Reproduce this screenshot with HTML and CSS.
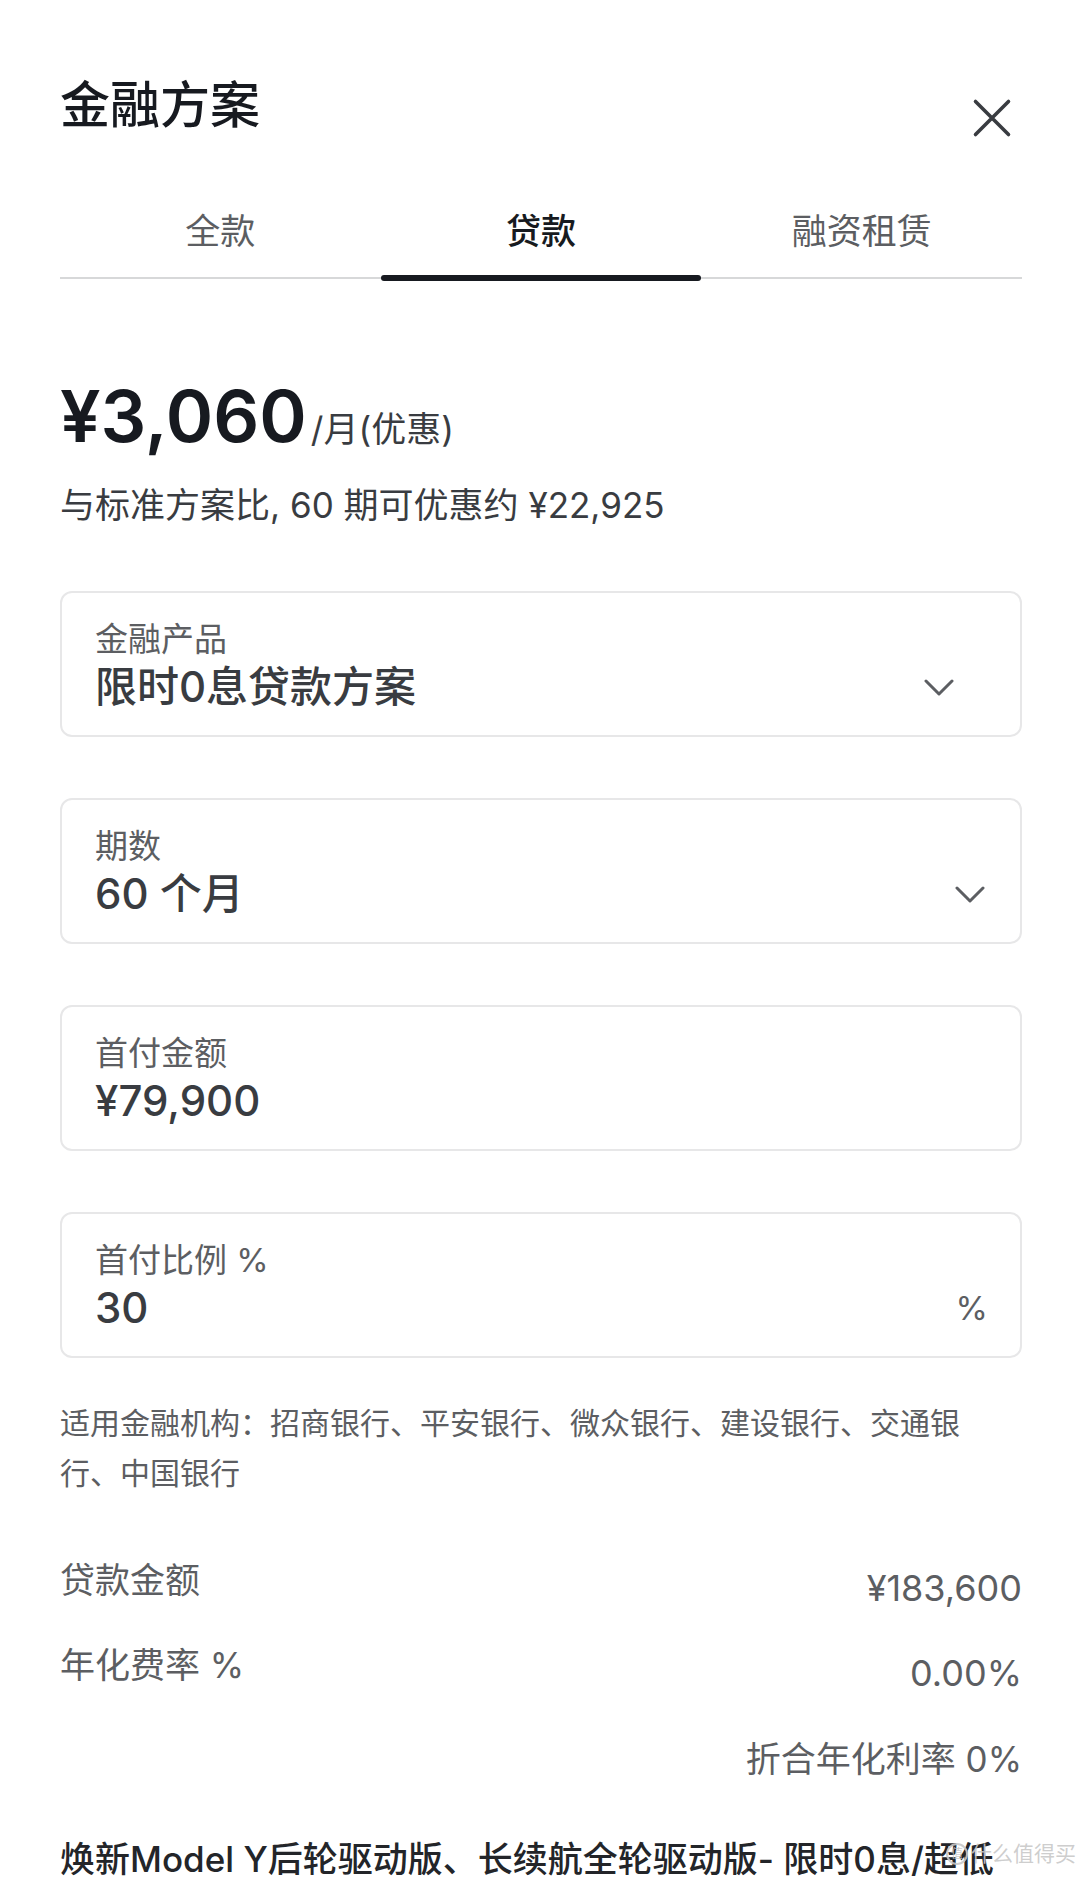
FILE: index.html
```html
<!DOCTYPE html>
<html lang="zh-CN">
<head>
<meta charset="utf-8">
<title>金融方案</title>
<link rel="stylesheet" href="styles.css">
</head>
<body>
<div class="page">
  <header class="header">
    <h1 class="title">金融方案</h1>
    <button class="close" aria-label="关闭">
      <svg viewBox="0 0 40 40" width="40" height="40"><path d="M3.5 3.5 L36.5 36.5 M36.5 3.5 L3.5 36.5" stroke="#393c41" stroke-width="3.6" stroke-linecap="round" fill="none"/></svg>
    </button>
  </header>

  <nav class="tabs">
    <div class="tab">全款</div>
    <div class="tab active">贷款</div>
    <div class="tab">融资租赁</div>
  </nav>

  <div class="price"><span class="amount">¥3,060</span><span class="unit">/月(优惠)</span></div>
  <p class="sub">与标准方案比, 60 期可优惠约 ¥22,925</p>

  <div class="field">
    <div class="label">金融产品</div>
    <div class="value-row">
      <span class="value">限时0息贷款方案</span>
      <svg class="chev chev-inset" viewBox="0 0 30 17" width="30" height="17"><path d="M2 2 L15 15 L28 2" stroke="#5c5e62" stroke-width="3" stroke-linecap="round" stroke-linejoin="round" fill="none"/></svg>
    </div>
  </div>

  <div class="field">
    <div class="label">期数</div>
    <div class="value-row">
      <span class="value">60 个月</span>
      <svg class="chev" viewBox="0 0 30 17" width="30" height="17"><path d="M2 2 L15 15 L28 2" stroke="#5c5e62" stroke-width="3" stroke-linecap="round" stroke-linejoin="round" fill="none"/></svg>
    </div>
  </div>

  <div class="field">
    <div class="label">首付金额</div>
    <div class="value-row">
      <span class="value">¥79,900</span>
    </div>
  </div>

  <div class="field">
    <div class="label">首付比例 %</div>
    <div class="value-row">
      <span class="value">30</span>
      <span class="suffix">%</span>
    </div>
  </div>

  <p class="banks">适用金融机构：招商银行、平安银行、微众银行、建设银行、交通银行、中国银行</p>

  <div class="row row-first">
    <span class="row-label">贷款金额</span>
    <span class="row-value">¥183,600</span>
  </div>
  <div class="row row-second">
    <span class="row-label">年化费率 %</span>
    <span class="row-value">0.00%</span>
  </div>
  <div class="note">折合年化利率 0%</div>

  <h2 class="offer">焕新Model Y后轮驱动版、长续航全轮驱动版- 限时0息/超低</h2>

  <div class="watermark"><span class="wm-logo">值</span>什么值得买</div>
</div>
</body>
</html>
```

FILE: styles.css
```css
* { box-sizing: border-box; }

html, body {
  margin: 0;
  padding: 0;
  background: #ffffff;
}

body {
  font-family: Inter, "Noto Sans CJK SC", "Noto Sans", sans-serif;
  color: #171a20;
  overflow: hidden;
}

.page {
  position: relative;
  width: 1080px;
  padding: 0 58px 0 60px;
}

.header {
  display: flex;
  justify-content: space-between;
  align-items: flex-start;
  padding-top: 75px;
}

.title {
  margin: 0;
  font-size: 50px;
  line-height: 60px;
  font-weight: 500;
  color: #171a20;
}

.close {
  width: 40px;
  height: 40px;
  margin: 23px 10px 0 0;
  padding: 0;
  border: 0;
  background: none;
  display: block;
}
.close svg { display: block; }

.tabs {
  margin-top: 69px;
  display: grid;
  grid-template-columns: repeat(3, 1fr);
  border-bottom: 2px solid #d7d8d9;
}

.tab {
  position: relative;
  text-align: center;
  font-size: 35px;
  line-height: 48px;
  padding-bottom: 22px;
  color: #5c5e62;
}

.tab.active {
  color: #171a20;
  font-weight: 500;
}

.tab.active::after {
  content: "";
  position: absolute;
  left: 0;
  right: 0;
  bottom: -4px;
  height: 6px;
  border-radius: 3px;
  background: #171a20;
}

.price {
  margin-top: 93px;
  font-size: 72px;
  line-height: 88px;
  font-weight: 600;
  color: #171a20;
  white-space: nowrap;
}

.unit {
  font-size: 35px;
  line-height: 1;
  font-weight: 400;
  color: #393c41;
  margin-left: 4px;
}

.sub {
  margin: 20px 0 0;
  font-size: 35px;
  line-height: 50px;
  color: #393c41;
}

.field {
  margin-top: 61px;
  height: 146px;
  border: 2px solid #e7e7e8;
  border-radius: 12px;
  padding: 23px 35px 0 33px;
}

.label {
  font-size: 33px;
  line-height: 46px;
  color: #5c5e62;
}

.value-row {
  display: flex;
  justify-content: space-between;
  align-items: center;
  height: 50px;
}

.value {
  font-size: 42px;
  line-height: 50px;
  font-weight: 500;
  color: #393c41;
}

.chev { display: block; }
.chev-inset { margin-right: 31px; }

.suffix {
  font-size: 33px;
  color: #5c5e62;
  margin-right: -3px;
}

.banks {
  margin: 40px 0 0;
  max-width: 945px;
  font-size: 30px;
  line-height: 50px;
  color: #5c5e62;
}

.row {
  display: flex;
  justify-content: space-between;
  align-items: flex-start;
}
.row-first { margin-top: 57px; }
.row-second { margin-top: 27px; }

.row-label {
  font-size: 35px;
  line-height: 50px;
  color: #5c5e62;
}

.row-value {
  margin-top: 8px;
  font-size: 36px;
  line-height: 50px;
  color: #5c5e62;
}

.note {
  margin-top: 36px;
  text-align: right;
  font-size: 35px;
  line-height: 50px;
  color: #5c5e62;
}

.offer {
  margin: 50px 0 0;
  font-size: 35px;
  line-height: 50px;
  font-weight: 500;
  color: #232529;
  white-space: nowrap;
}

.watermark {
  position: absolute;
  top: 1842px;
  right: 4px;
  display: flex;
  align-items: center;
  gap: 3px;
  font-size: 21px;
  line-height: 24px;
  color: rgba(200, 200, 200, 0.9);
}

.wm-logo {
  display: inline-flex;
  align-items: center;
  justify-content: center;
  width: 22px;
  height: 22px;
  border-radius: 50%;
  border: 2px solid rgba(200, 200, 200, 0.9);
  font-size: 12px;
  line-height: 1;
}
```
